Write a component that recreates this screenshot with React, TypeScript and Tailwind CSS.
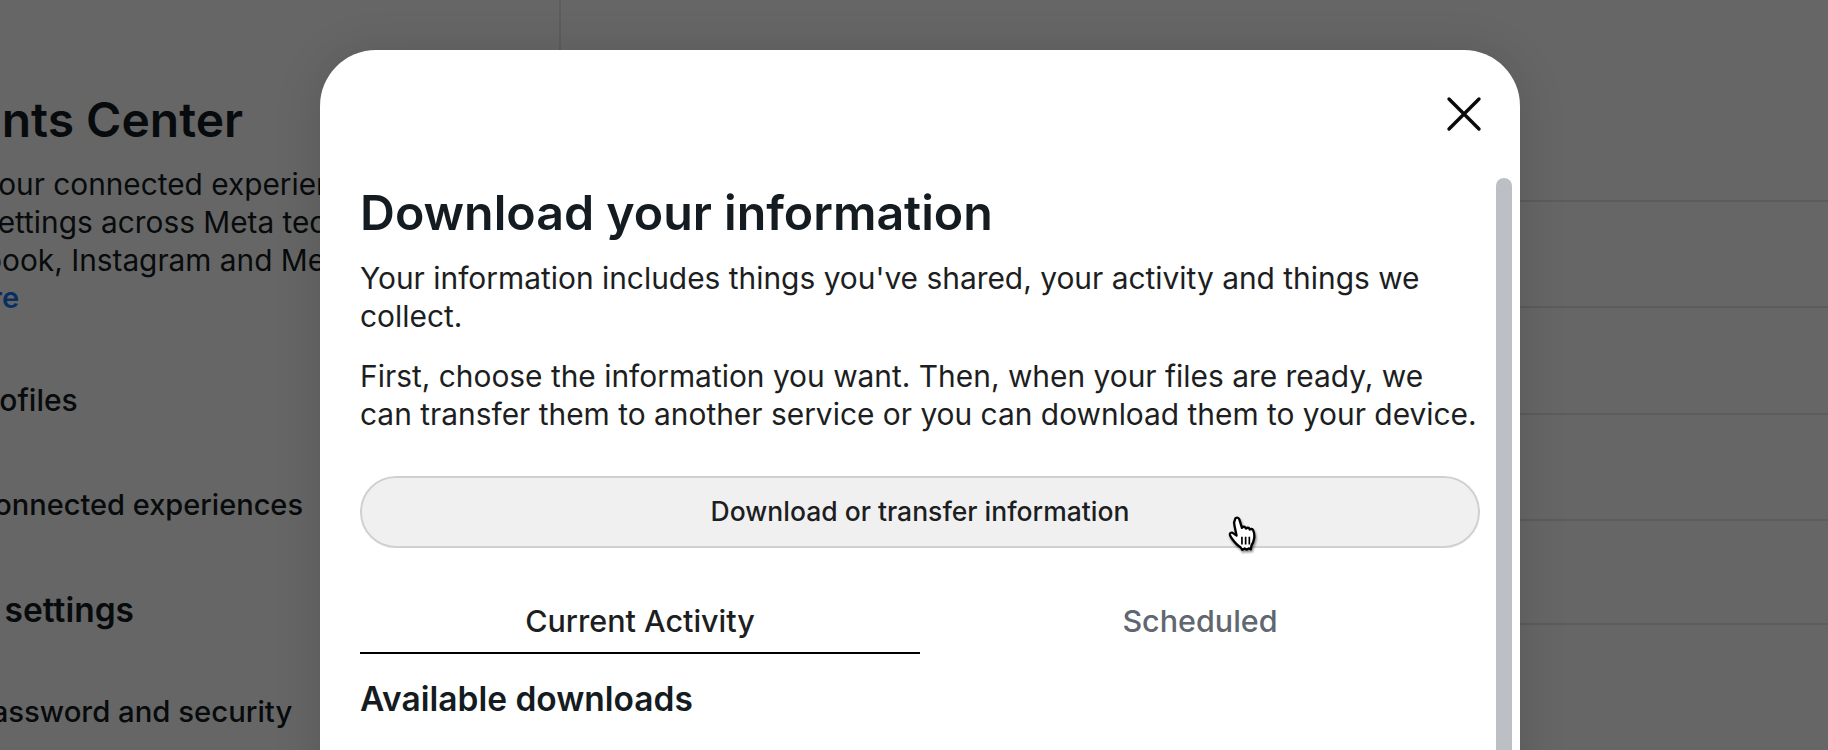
import React from 'react';

const HandCursor = () => (
  <svg viewBox="0 0 32 36" className="w-[36px] h-[38px] drop-shadow-[1px_2px_1px_rgba(0,0,0,0.45)]">
    <path
      d="M9 3c1.300-1 3-.4 3.500 1.200l2.500 8c.6-1.300 2.400-1.500 3.200-.3l.7 1c.7-1.100 2.400-1.100 3.100 0l.5.9c.8-.9 2.400-.7 3 .4 1.200 2.300 1.500 5.500 1 8.300-.4 2.600-1.300 4.500-2.500 6.500l-.6 3.500-2-.9-1.800 1.200-2-1.100-2.300 1.300-1.700-2.500c-2.800-1.600-5.500-4.500-8-8-1-1.400-1.800-2.800-2-3.800-.2-1.500 1.200-2.500 2.600-1.800l3.700 2.600c-.6-3.300-1.900-8-2.400-12.500C8.500 4.500 8.500 3.500 9 3z"
      fill="#ffffff"
      stroke="#000000"
      strokeWidth="2.200"
      strokeLinejoin="round"
    />
    <path d="M15 20.500v7.500M18.500 20.500v7.500M22 20.500v7.500" stroke="#000000" strokeWidth="1.600" fill="none" />
  </svg>
);

const CloseIcon = () => (
  <svg viewBox="0 0 36 36" className="w-[36px] h-[36px]" fill="none" stroke="#0a0a0a" strokeWidth="3.400" strokeLinecap="round">
    <path d="M3 3l30 30M33 3L3 33" />
  </svg>
);

const Sidebar = () => (
  <div className="w-[561px] h-full shrink-0 border-r-2 border-[#e5e5e5] overflow-hidden">
    <div className="-ml-[140px] w-[701px] pt-[92px] text-[#141c21]">
      <h1 className="-ml-[7px] text-[48px] leading-[56px] font-semibold whitespace-nowrap">Accounts Center</h1>
      <div className="mt-[17px] text-[29.800px] leading-[38px] whitespace-nowrap">
        <p>Manage your connected experiences and</p>
        <p>account settings across Meta technologies</p>
        <p>like Facebook, Instagram and Meta Horizon.</p>
        <p className="text-[29px] font-semibold text-[#1877f2]">Learn more</p>
      </div>
      <p className="pl-[109px] mt-[64px] text-[30px] leading-[38px] font-medium">Profiles</p>
      <p className="pl-[113px] mt-[67px] text-[29px] leading-[38px] font-medium">Connected experiences</p>
      <p className="mt-[67px] text-[33.500px] leading-[38px] font-semibold whitespace-nowrap">Account settings</p>
      <p className="pl-[113px] mt-[64px] text-[29.300px] leading-[38px] font-medium">Password and security</p>
    </div>
  </div>
);

const Content = () => (
  <div className="flex-1 pt-[200px]">
    <div className="h-[106px] border-t-2 border-[#e5e5e5]" />
    <div className="h-[107px] border-t-2 border-[#e5e5e5]" />
    <div className="h-[106px] border-t-2 border-[#e5e5e5]" />
    <div className="h-[106px] border-t-2 border-[#e5e5e5] border-b-2" />
  </div>
);

const App: React.FC = () => {
  return (
    <div className="relative h-[750px] w-[1828px] overflow-hidden bg-white font-['Inter',sans-serif]">
      <div className="flex h-full">
        <Sidebar />
        <Content />
      </div>

      {/* dialog */}
      <div className="absolute inset-0 bg-black/60 flex justify-center pt-[50px] pl-[12px]">
        <div className="relative w-[1200px] h-[760px] bg-white rounded-t-[56px] shadow-[0_4px_48px_rgba(0,0,0,0.14)] overflow-hidden">
          <div className="flex justify-end pt-[46px] pr-[38px]">
            <button>
              <CloseIcon />
            </button>
          </div>

          <div className="absolute right-[8px] top-[128px] bottom-0 w-[16px] rounded-t-full bg-[#bcc0c4]" />

          <div className="px-[40px] w-[1200px] pt-[53px]">
            <h2 className="text-[48.300px] leading-[56px] font-semibold text-[#141c21]">Download your information</h2>
            <div className="mt-[18px] text-[29.900px] leading-[38px] text-[#1c1e21] whitespace-nowrap">
              <p>Your information includes things you've shared, your activity and things we<br />collect.</p>
              <p className="mt-[22px]">First, choose the information you want. Then, when your files are ready, we<br />can transfer them to another service or you can download them to your device.</p>
            </div>
            <button className="mt-[43px] w-full h-[72px] rounded-full border-2 border-[#ced0d4] bg-[#f0f0f1] text-[26.500px] font-medium text-[#1c1e21]">
              Download or transfer information
            </button>
            <div className="mt-[53px] flex text-[30.500px] font-medium">
              <div className="flex-1 h-[53px] text-center leading-[40px] border-b-2 border-[#000000] text-[#1c1e21]">Current Activity</div>
              <div className="flex-1 h-[53px] text-center leading-[40px] text-[#606770]">Scheduled</div>
            </div>
            <h3 className="mt-[25px] text-[33.500px] leading-[40px] font-semibold text-[#141c21]">Available downloads</h3>
          </div>

          <div className="absolute left-[905px] top-[465px]">
            <HandCursor />
          </div>
        </div>
      </div>
    </div>
  );
};

export default App;
